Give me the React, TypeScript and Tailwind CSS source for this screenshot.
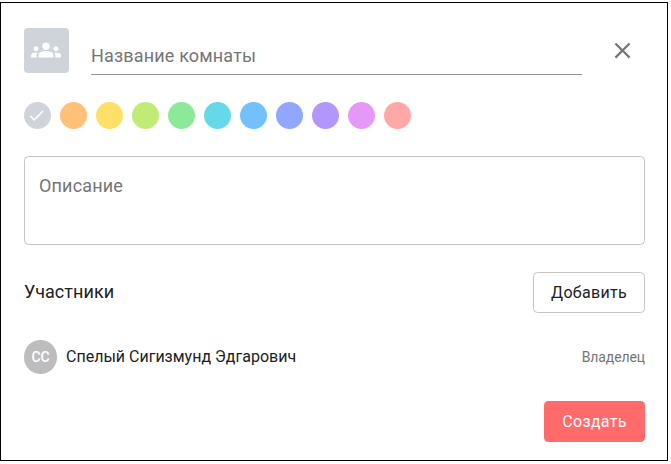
import { MdCheck, MdClose, MdGroups } from 'react-icons/md'

const colors = [
  'bg-[#ced4da]',
  'bg-[#ffc078]',
  'bg-[#ffe066]',
  'bg-[#c0eb75]',
  'bg-[#8ce99a]',
  'bg-[#66d9e8]',
  'bg-[#74c0fc]',
  'bg-[#91a7ff]',
  'bg-[#b197fc]',
  'bg-[#e599f7]',
  'bg-[#ffa8a8]',
]

function RoomHeader() {
  return (
    <div className="flex h-[47px] items-start">
      <div className="flex size-[45px] items-center justify-center rounded-[4px] bg-[#ced4da] pr-[2px] pb-px text-white">
        <MdGroups size={30} />
      </div>
      <label className="ml-[22px] h-[47px] w-[491px] border-b border-[#949494] pt-[15px] text-[18px] leading-[26px] tracking-[0.169px] text-[#757575]">
        Название комнаты
      </label>
      <button className="mt-[9px] ml-[27px] text-[#757575]" aria-label="Закрыть">
        <MdClose size={27} />
      </button>
    </div>
  )
}

function ColorPicker() {
  return (
    <div className="mt-[27px] flex gap-[9px]">
      {colors.map((color, i) => (
        <button
          key={color}
          className={`flex size-[27px] items-center justify-center rounded-full text-white ${color}`}
        >
          {i === 0 && <MdCheck size={19} className="mr-[2px]" />}
        </button>
      ))}
    </div>
  )
}

export default function App() {
  return (
    <div className="h-[464px] bg-white pt-[2px] font-['Roboto',sans-serif] text-[#212121]">
      <div className="h-[459px] w-[668px] border border-black pt-[25px] pr-[22px] pl-[23px]">
        <RoomHeader />
        <ColorPicker />

        <label className="mt-[27px] block h-[89px] rounded-[4.5px] border border-[#c4c4c4] px-[14px] pt-4 text-[18px] leading-[26px] tracking-[0.169px] text-[#757575]">
          Описание
        </label>

        <div className="mt-[27px] flex h-[41px] items-center justify-between">
          <h2 className="pb-[2px] text-[18px] leading-[27px] tracking-[0.05px]">Участники</h2>
          <button className="h-[41px] w-[112px] rounded-[4.5px] border border-[#c4c4c4] text-[16px] tracking-[0.3px]">
            Добавить
          </button>
        </div>

        <div className="mt-[27px] flex h-[34px] items-center">
          <div className="flex h-[34px] w-[33px] items-center justify-center rounded-full bg-[#bdbdbd] text-[14px] font-medium tracking-[-0.1px] text-white">
            CC
          </div>
          <span className="ml-[9px] text-[16px] tracking-normal">Спелый Сигизмунд Эдгарович</span>
          <span className="ml-auto text-[14px] tracking-[-0.1px] text-[#757575]">Владелец</span>
        </div>

        <div className="mt-[27px] flex justify-end">
          <button className="h-[41px] w-[101px] rounded-[4.5px] bg-[#ff6b6b] text-[16px] tracking-[0.3px] text-white">
            Создать
          </button>
        </div>
      </div>
    </div>
  )
}
